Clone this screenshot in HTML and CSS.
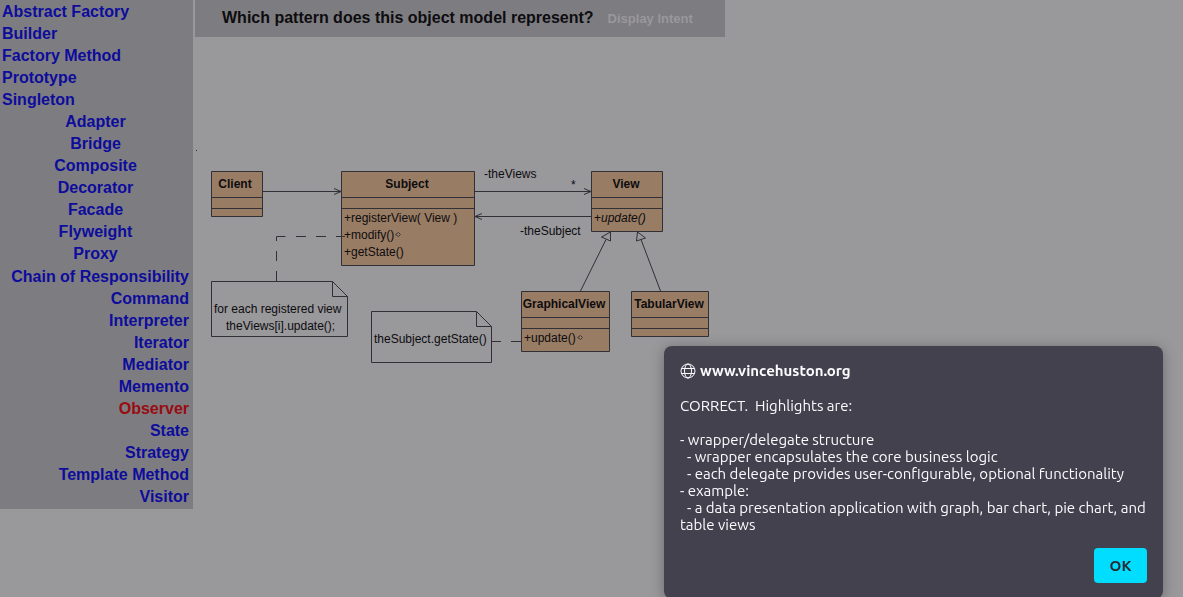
FILE: index.html
```
<!DOCTYPE html>
<html lang="en">
<head>
<meta charset="utf-8">
<title>Design pattern quiz</title>
<link rel="stylesheet" href="styles.css">
</head>
<body>
<div class="page">
  <nav class="sidebar" aria-label="Patterns">
    <div class="group creational">
      <a href="#">Abstract Factory</a>
      <a href="#">Builder</a>
      <a href="#">Factory Method</a>
      <a href="#">Prototype</a>
      <a href="#">Singleton</a>
    </div>
    <div class="group structural">
      <a href="#">Adapter</a>
      <a href="#">Bridge</a>
      <a href="#">Composite</a>
      <a href="#">Decorator</a>
      <a href="#">Facade</a>
      <a href="#">Flyweight</a>
      <a href="#">Proxy</a>
    </div>
    <div class="group behavioral">
      <a href="#">Chain of Responsibility</a>
      <a href="#">Command</a>
      <a href="#">Interpreter</a>
      <a href="#">Iterator</a>
      <a href="#">Mediator</a>
      <a href="#">Memento</a>
      <a href="#" class="active">Observer</a>
      <a href="#">State</a>
      <a href="#">Strategy</a>
      <a href="#">Template Method</a>
      <a href="#">Visitor</a>
    </div>
  </nav>
  <main class="content">
    <header class="question">
      <h1>Which pattern does this object model represent?</h1>
      <button type="button" class="intent">Display Intent</button>
    </header>
    <svg class="diagram" width="530" height="223" viewBox="195 147 530 223" role="img" aria-label="Object model">
      <rect x="196" y="150" width="1" height="1" fill="#074a0c"/>
      <g class="box">
        <path d="M211.500 171.500h51v45h-51zM211.500 197.500h51M211.500 208.500h51"/>
        <path d="M341.500 171.500h133v94h-133zM341.500 197.500h133M341.500 208.500h133"/>
        <path d="M591.500 171.500h71v60h-71zM591.500 197.500h71M591.500 208.500h71"/>
        <path d="M521.500 291.500h88v60h-88zM521.500 317.500h88M521.500 328.500h88"/>
        <path d="M631.500 291.500h77v45h-77zM631.500 317.500h77M631.500 328.500h77"/>
      </g>
      <g class="line">
        <path d="M211.500 281.500h121l15 15v40h-136zM332.500 281.500v15h15"/>
        <path d="M371.500 311.500h105l15 15v36h-120zM476.500 311.500v15h15"/>
        <path d="M263 191.500h78M334 188.500l7 3l-7 3"/>
        <path d="M475 191.500h116M584 188.500l7 3l-7 3"/>
        <path d="M591 216.500h-116M482 213.500l-7 3l7 3"/>
        <path d="M580.500 291L606 239.500M610.500 232v9l-9-4z"/>
        <path d="M660.500 291L641 239.500M637.500 232l-1 9l9-3z"/>
        <path d="M276.500 241v-4.500h9M296 236.500h10M316 236.500h10M336 236.500h9M276.500 251v10M276.500 271v10"/>
        <path d="M492 341.500h9M511 341.500h10"/>
        <path class="thin" d="M395.500 234.500l3-2l2 2l-2 2zM577.500 337.500l3-2l2 2l-2 2z"/>
      </g>
      <g class="name">
        <text x="235" y="188">Client</text>
        <text x="407" y="188">Subject</text>
        <text x="626" y="188">View</text>
        <text x="564" y="308">GraphicalView</text>
        <text x="669" y="308">TabularView</text>
      </g>
      <g class="label">
        <text x="344" y="222">+registerView( View )</text>
        <text x="344" y="239">+modify()</text>
        <text x="344" y="256">+getState()</text>
        <text x="594" y="222">+<tspan class="abstract">update()</tspan></text>
        <text x="524" y="342">+update()</text>
        <text x="484" y="178">-theViews</text>
        <text x="571" y="189">*</text>
        <text x="520" y="235">-theSubject</text>
        <text x="214" y="313">for each registered view</text>
        <text x="226" y="330">theViews[i].update();</text>
        <text x="374" y="343">theSubject.getState()</text>
      </g>
    </svg>
  </main>
</div>
<div class="dialog" role="alertdialog" aria-labelledby="site" aria-describedby="message">
  <div class="site">
    <svg class="globe" width="16" height="16" viewBox="0 0 16 16" aria-hidden="true">
      <circle cx="8" cy="8" r="7"/>
      <ellipse cx="8" cy="8" rx="3.500" ry="7"/>
      <path d="M1.500 5.500h13M1.500 10.500h13"/>
    </svg>
    <strong id="site">www.vincehuston.org</strong>
  </div>
  <p class="message" id="message">CORRECT.  Highlights are:

- wrapper/delegate structure
  - wrapper encapsulates the core business logic
  - each delegate provides user-configurable, optional functionality
- example:
  - a data presentation application with graph, bar chart, pie chart, and table views</p>
  <button type="button" class="ok">OK</button>
</div>
</body>
</html>
```
FILE: styles.css
```
* {
  box-sizing: border-box;
}

body {
  margin: 0;
  background: #99989b;
  color: #0d0c0f;
  font-family: "Liberation Sans", Arial, sans-serif;
}

.page {
  display: flex;
  align-items: flex-start;
  gap: 2px;
}

.sidebar {
  flex: none;
  width: 193px;
  padding: 1px 4px 1px 2px;
  background: #7d7c80;
}

.group {
  display: flex;
  flex-direction: column;
}

.group a {
  color: #0d0c9c;
  font-size: 16px;
  font-weight: bold;
  line-height: 22px;
  text-decoration: none;
}

.creational {
  align-items: flex-start;
}

.structural {
  align-items: center;
}

.behavioral {
  align-items: flex-end;
  margin-top: 1px;
}

.group .active {
  color: #990c12;
}

.content {
  flex: 1;
  min-width: 0;
}

.question {
  display: flex;
  align-items: center;
  gap: 14px;
  max-width: 530px;
  padding: 7px 27px 8px;
  background: #7d7c80;
}

.question h1 {
  margin: 0;
  font-size: 16px;
  line-height: 22px;
}

.intent {
  padding: 2px 0 0;
  border: 0;
  background: none;
  color: #99989b;
  font: bold 13px/20px "Liberation Sans", Arial, sans-serif;
}

.diagram {
  display: block;
  margin-top: 110px;
}

.box path {
  fill: #997c64;
  stroke: #303036;
}

.line path {
  fill: none;
  stroke: #303036;
}

.line .thin {
  stroke: #3d3836;
}

.name text {
  fill: #0d0c0f;
  font-size: 12px;
  font-weight: bold;
  text-anchor: middle;
}

.label text {
  fill: #0d0c0f;
  font-size: 12px;
}

.abstract {
  font-style: italic;
}

.dialog {
  position: fixed;
  top: 346px;
  right: 20px;
  display: flex;
  flex-direction: column;
  width: 499px;
  padding: 16px;
  border-radius: 8px;
  background: #42414d;
  box-shadow: 0 2px 14px rgba(0, 0, 0, 0.3);
  color: #fbfbfe;
  font-family: Ubuntu, "Noto Sans", sans-serif;
  font-size: 15px;
}

.site {
  display: flex;
  align-items: center;
  gap: 4px;
  line-height: 18px;
}

.globe {
  fill: none;
  stroke: #fbfbfe;
}

.message {
  margin: 17px 0 15px;
  line-height: 17px;
  white-space: pre-wrap;
}

.ok {
  align-self: flex-end;
  width: 53px;
  height: 35px;
  padding: 0;
  border: 0;
  border-radius: 4px;
  background: #00ddff;
  color: #2b2a33;
  font: bold 15px/20px Ubuntu, "Noto Sans", sans-serif;
}
```
